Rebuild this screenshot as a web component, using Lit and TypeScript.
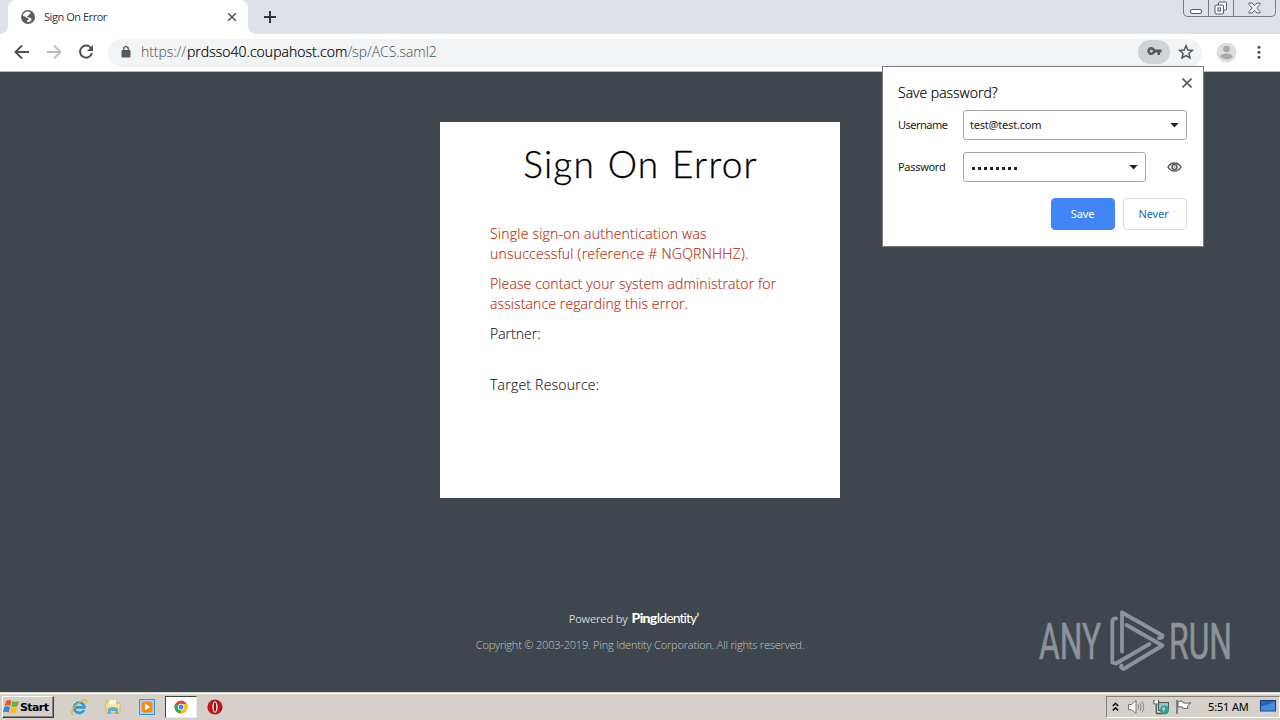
import { LitElement, html, css, svg } from "lit";
import { customElement } from "lit/decorators.js";

const chevron = html`<svg class="caret" width="9" height="5" viewBox="0 0 9 5"><path d="M.3 0h8.400L4.500 4.500z" fill="#222"/></svg>`;

@customElement("browser-chrome")
class BrowserChrome extends LitElement {
  static styles = css`
    :host { display: block; font-family: "Open Sans", "Noto Sans", sans-serif; }
    svg { display: block; flex: none; }
    .strip { height: 34px; background: #dee1e6; display: flex; padding-left: 8px; box-sizing: border-box; }
    .tab { width: 240px; height: 34px; background: #fff; border-radius: 8px 8px 0 0; display: flex; align-items: center; padding: 0 11px 0 13px; box-sizing: border-box; position: relative; }
    .tab::before, .tab::after { content: ""; position: absolute; bottom: 0; width: 8px; height: 8px; }
    .tab::before { left: -8px; background: radial-gradient(circle at 0 0, transparent 7.500px, #fff 8px); }
    .tab::after { right: -8px; background: radial-gradient(circle at 100% 0, transparent 7.500px, #fff 8px); }
    .title { font-size: 11px; color: #333; margin-left: 9px; flex: 1; letter-spacing: -0.45px; padding-bottom: 2px; }
    .plus { margin: 11px 0 0 16px; }
    .win { margin-left: auto; margin-right: 4px; width: 93px; height: 17px; border: 1px solid #737985; border-top: 0; border-radius: 0 0 5px 5px; box-sizing: border-box; display: flex; }
    .win span { display: flex; justify-content: center; align-items: center; border-right: 1px solid #737985; width: 25px; box-sizing: border-box; }
    .win span:last-child { border: 0; width: 41px; }
    .bar { height: 38px; background: #fff; border-bottom: 1px solid #b8bbc0; box-sizing: border-box; display: flex; align-items: center; padding: 0 13px 0 13px; }
    .nav { display: flex; gap: 14px; }
    .omni { margin-left: 13px; height: 28px; width: 1094px; border-radius: 14px; background: #f1f3f4; display: flex; align-items: center; box-sizing: border-box; padding: 0 7px 0 13px; }
    .lock, .star, .key, .dots, .nav svg { margin-top: -1px; }
    .url { font-size: 14px; font-weight: 300; color: #4c5054; margin-left: 10px; flex: 1; white-space: nowrap; letter-spacing: -0.05px; padding-bottom: 2px; }
    .url b { color: #000; font-weight: 300; letter-spacing: 0.03px; margin-left: 1px; -webkit-text-stroke: 0.2px #000; }
    .key { width: 32px; height: 24px; border-radius: 12px; background: #d0d3d5; display: flex; align-items: center; justify-content: center; margin-right: 7px; }
    .key svg { margin-top: -2px; }
    .me { margin: -1px 0 0 14px; }
    .dots { margin-left: 14px; }
  `;
  render() {
    return html`
      <div class="strip">
        <div class="tab">
          <svg width="14" height="14" viewBox="0 0 14 14"><circle cx="7" cy="7" r="7" fill="#5a5e62"/><path d="M6 1.600C4 2 2 3.700 1.600 6.100l2.600.5 1.600 1.300 1.500.2.300 1.500-1.500.7.200 1.800c1.500.1 3.200-.7 4.200-1.900L10.400 8.600 8.300 7.600 6.700 7.200 5.600 6.200l2-.8.6-1.300 1.500-.5-.2-1.200C8.400 1.700 7.200 1.400 6 1.600z" fill="#fff"/></svg>
          <span class="title">Sign On Error</span>
          <svg width="10" height="10" viewBox="0 0 10 10"><path d="M1.200 1.200l7.600 7.600M8.800 1.200L1.200 8.800" stroke="#55595d" stroke-width="1.600"/></svg>
        </div>
        <svg class="plus" width="12" height="12" viewBox="0 0 12 12"><path d="M6 0v12M0 6h12" stroke="#2d3340" stroke-width="2"/></svg>
        <div class="win">
          <span><svg width="13" height="15" viewBox="0 0 13 15"><rect x=".5" y="8.500" width="11" height="4" rx="1.500" fill="#fff" stroke="#555d6b"/></svg></span>
          <span><svg width="14" height="14" viewBox="0 0 14 14" fill="#f4f5f7" stroke="#555d6b"><rect x="4.500" y="1" width="8" height="8" rx="1"/><rect x="1" y="4" width="8.500" height="9" rx="1"/><rect x="4" y="7" width="2.500" height="3"/></svg></span>
          <span><svg width="13" height="12" viewBox="0 0 13 12"><path d="M1 1h3l2.500 2.700L9 1h3v1.500L8.800 6 12 9.500V11H9L6.500 8.300 4 11H1V9.500L4.200 6 1 2.500z" fill="#f7f8fa" stroke="#555d6b"/></svg></span>
        </div>
      </div>
      <div class="bar">
        <div class="nav">
          <svg width="18" height="18" viewBox="0 0 18 18" fill="none" stroke="#4d5155" stroke-width="1.900"><path d="M16 9H3M9 2.500L2.500 9 9 15.500"/></svg>
          <svg width="18" height="18" viewBox="0 0 18 18" fill="none" stroke="#b9bbbe" stroke-width="1.900"><path d="M2 9h13M9 2.500L15.500 9 9 15.500"/></svg>
          <svg width="18" height="18" viewBox="0 0 18 18"><path d="M14 5.200A6 6 0 1 0 14.900 10" fill="none" stroke="#4d5155" stroke-width="2"/><path d="M16 2v6h-6z" fill="#4d5155"/></svg>
        </div>
        <div class="omni">
          <svg class="lock" width="10" height="12" viewBox="0 0 10 12"><rect x=".5" y="4" width="9" height="7.500" rx="1" fill="#55595d"/><path d="M2.700 4.500V3a2.300 2.300 0 0 1 4.600 0v1.500" fill="none" stroke="#55595d" stroke-width="1.300"/></svg>
          <span class="url">https://<b>prdsso40.coupahost.com</b>/sp/ACS.saml2</span>
          <span class="key"><svg width="15" height="10" viewBox="0 0 15 10"><path d="M8 3.500A4 4 0 1 0 8 6.500h2.500V9h2.500V6.500h1.500v-3zM4.300 6.500a1.500 1.500 0 1 1 0-3 1.500 1.500 0 0 1 0 3z" fill="#55595d"/></svg></span>
          <svg class="star" width="18" height="18" viewBox="0 0 18 18"><path d="M9 2.700l1.800 4.300 4.600.4-3.500 3.100 1.100 4.500L9 12.600 5 15l1.100-4.500-3.500-3.100 4.600-.4z" fill="none" stroke="#55595d" stroke-width="1.500"/></svg>
        </div>
        <svg class="me" width="21" height="21" viewBox="0 0 21 21"><circle cx="10.500" cy="10.500" r="10" fill="#dddddf"/><circle cx="10.500" cy="7" r="3.300" fill="#a8a8aa"/><path d="M4.500 14.500c0-4 12-4 12 0-1.500 3.500-10.500 3.500-12 0z" fill="#a8a8aa"/></svg>
        <svg class="dots" width="16" height="16" viewBox="0 0 16 16" fill="#4d5155"><circle cx="8" cy="3.200" r="1.500"/><circle cx="8" cy="8.200" r="1.500"/><circle cx="8" cy="13.200" r="1.500"/></svg>
      </div>`;
  }
}

@customElement("password-bubble")
class PasswordBubble extends LitElement {
  static styles = css`
    :host { display: block; width: 322px; height: 181px; box-sizing: border-box; background: #fff; border: 1px solid #777b80; font: 11px/14px "Noto Sans", sans-serif; color: #222; padding: 0 16px 0 15px; }
    svg { display: block; flex: none; }
    .head { display: flex; justify-content: space-between; height: 43px; }
    h2 { margin: 17px 0 0; font: 300 14px/18px "Open Sans", sans-serif; color: #000; -webkit-text-stroke: 0.2px #000; }
    .x { margin: 11px -5px 0 0; }
    .row { display: flex; align-items: center; height: 30px; margin-bottom: 12px; }
    label { width: 65px; letter-spacing: -0.5px; }
    .row + .row label { letter-spacing: -0.3px; }
    .field { flex: 1; height: 30px; border: 1px solid #a5a7aa; border-radius: 3px; box-sizing: border-box; display: flex; align-items: center; justify-content: space-between; padding: 0 7px 0 6px; letter-spacing: -0.2px; }
    .pw { padding-left: 8px; }
    .mask { display: flex; gap: 3px; padding-top: 3px; }
    .mask i { width: 3px; height: 3px; background: #222; }
    .eye { margin: 0 5px 0 21px; }
    .actions { display: flex; justify-content: flex-end; gap: 8px; margin-top: 16px; }
    .btn { width: 64px; height: 32px; border-radius: 4px; border: 1px solid #dadce0; box-sizing: border-box; display: flex; align-items: center; justify-content: center; color: #2368b9; padding-right: 3px; letter-spacing: -0.1px; }
    .save { background: #4285f4; border-color: #4285f4; color: #fff; padding-right: 1px; }
  `;
  render() {
    return html`
      <div class="head"><h2>Save password?</h2>
        <svg class="x" width="10" height="10" viewBox="0 0 10 10"><path d="M.5.500l9 9M9.500.500l-9 9" stroke="#55595d" stroke-width="1.600"/></svg></div>
      <div class="row"><label>Username</label><div class="field"><span>test@test.com</span>${chevron}</div></div>
      <div class="row"><label>Password</label><div class="field pw"><span class="mask">${Array.from({ length: 8 }, () => html`<i></i>`)}</span>${chevron}</div>
        <svg class="eye" width="15" height="10" viewBox="0 0 15 10"><path d="M1 5C4-.4 11-.4 14 5 11 10.400 4 10.400 1 5z" fill="none" stroke="#55595d" stroke-width="1.500"/><circle cx="7.500" cy="5" r="2.500" fill="none" stroke="#55595d" stroke-width="1.500"/><circle cx="7.500" cy="5" r=".8" fill="#55595d"/></svg></div>
      <div class="actions"><span class="btn save">Save</span><span class="btn">Never</span></div>`;
  }
}

@customElement("error-page")
class ErrorPage extends LitElement {
  static styles = css`
    :host { display: flex; flex-direction: column; align-items: center; background: #40464d; padding-top: 50px; box-sizing: border-box; }
    .card { width: 400px; height: 376px; background: #fff; box-sizing: border-box; padding: 20px 50px 0; font: 300 14px/20px "Open Sans", sans-serif; color: #222; }
    h1 { margin: -1px -30px 37px; height: 46px; font: 300 37px/46px Lato, sans-serif; color: #000; text-align: center; letter-spacing: 1.200px; word-spacing: 1.500px; white-space: nowrap; -webkit-text-stroke: 0.3px #000; padding-left: 1px; }
    p { margin: 0 0 10px; white-space: nowrap; letter-spacing: 0.15px; -webkit-text-stroke: 0.15px currentColor; }
    .err { color: #bd2c0c; }
    .a { letter-spacing: 0.23px; }
    .b { letter-spacing: 0.12px; }
    .gap { margin-bottom: 31px; letter-spacing: 0; }
    .powered { margin-top: 111px; display: flex; align-items: baseline; color: #d3d6d9; font: 11px/18px "Open Sans", sans-serif; padding-right: 13px; letter-spacing: -0.15px; }
    .ping { color: #fff; font: 14px/18px Lato, sans-serif; margin-left: 4px; letter-spacing: -0.95px; }
    .ping b { font-weight: 900; letter-spacing: -0.7px; }
    .copy { margin-top: 9px; font: 300 11px/16px "Open Sans", sans-serif; color: #c3c7ca; white-space: nowrap; letter-spacing: -0.19px; }
  `;
  render() {
    return html`
      <div class="card">
        <h1>Sign On Error</h1>
        <p class="err a">Single sign-on authentication was<br>unsuccessful (reference # NGQRNHHZ).</p>
        <p class="err b">Please contact your system administrator for<br>assistance regarding this error.</p>
        <p class="gap">Partner:</p>
        <p class="a">Target Resource:</p>
      </div>
      <div class="powered">Powered by<span class="ping"><b>Ping</b>Identity’</span></div>
      <div class="copy">Copyright © 2003-2019. Ping Identity Corporation. All rights reserved.</div>`;
  }
}

@customElement("task-bar")
class TaskBar extends LitElement {
  static styles = css`
    :host { display: flex; height: 28px; box-sizing: border-box; background: #d5d0c9; border-top: 1px solid #d5d0c9; box-shadow: inset 0 1px #fff; align-items: center; padding: 1px 0 0 2px; font: 11px "DejaVu Sans", sans-serif; color: #000; }
    svg { display: block; flex: none; }
    .start { width: 52px; height: 22px; box-sizing: border-box; border: 1px solid; border-color: #fff #404040 #404040 #fff; box-shadow: inset -1px -1px #87837d; display: flex; align-items: center; font: bold 11px "DejaVu Sans", sans-serif; letter-spacing: -0.6px; }
    .quick { display: flex; align-items: center; margin-left: 16px; gap: 16px; }
    .active { width: 32px; height: 22px; background: #fff; border: 1px solid; border-color: #404040 #eee #eee #404040; box-sizing: border-box; display: flex; align-items: center; justify-content: center; margin: 0 -7px; }
    .tray { margin-left: auto; width: 174px; height: 22px; border: 1px solid; border-color: #85817b #fff #fff #85817b; box-sizing: border-box; display: flex; align-items: center; padding: 0 3px 0 5px; }
    .flag { margin-left: 7px; }
    .speaker { margin-left: 9px; }
    .net { margin-left: 8px; }
    .time { margin-left: 16px; font: 11px "Noto Sans", sans-serif; letter-spacing: -0.15px; flex: 1; white-space: nowrap; padding-bottom: 1px; }
  `;
  render() {
    return html`
      <div class="start">
        <svg width="17" height="16" viewBox="0 0 17 16"><path d="M3 2q3-2 5.500-.3L7.300 7Q4.500 5.500 1.700 7z" fill="#e85a28"/><path d="M9.500 2q3 1.500 6.500-.3L14.500 7q-3 1.700-6.200.300z" fill="#6ab03c"/><path d="M1.400 8q3-1.500 5.600 0l-1.300 5.500Q3 12 0 13.300z" fill="#3b82d4"/><path d="M8 8.300q3 1.500 6.200-.2L12.800 13.500q-3 1.600-6 .3z" fill="#f5bd2c"/></svg>Start
      </div>
      <div class="quick">
        <svg width="18" height="18" viewBox="0 0 18 18"><path d="M14 12A5.200 5.200 0 1 1 14.500 9.300H5" fill="none" stroke="#3497d5" stroke-width="2.700"/><path d="M3 16.500C-1 16 4 8 9.500 4.500 14 1 18 1 16.200 5.500" fill="none" stroke="#e4b53b" stroke-width="1.400"/></svg>
        <svg width="18" height="18" viewBox="0 0 18 18"><path d="M2 3h5l1 2h8v10H2z" fill="#f0d886" stroke="#c9a952" stroke-width=".7"/><path d="M5 2h7v5H5z" fill="#f9f4d5"/><path d="M2 6.500h14v3H2z" fill="#f4e4a0"/><path d="M4 16v-5.500q5-3 10 0V16h-2.500v-3h-5v3z" fill="#5cadd8"/></svg>
        <svg width="18" height="18" viewBox="0 0 18 18"><rect x="1.500" y="1.500" width="15" height="15" fill="#a9d0ec" stroke="#4a8fc1"/><rect x="3.500" y="3.500" width="11" height="11" rx="3" fill="#f28a1d"/><path d="M7 5.500v7l5-3.500z" fill="#fff"/></svg>
        <div class="active"><svg width="14" height="14" viewBox="0 0 14 14"><circle cx="7" cy="7" r="6.500" fill="#e04a3a"/><path d="M7 7L1.300 3.800A6.500 6.500 0 0 0 6.500 13.500z" fill="#35a853"/><path d="M7 7h6.500a6.500 6.500 0 0 1-7 6.500z" fill="#fbc116"/><path d="M7 4h5.800a6.500 6.500 0 0 1 .7 3L10 8z" fill="#fbc116"/><circle cx="7" cy="7" r="3.200" fill="#fff"/><circle cx="7" cy="7" r="2.500" fill="#4285f4"/></svg></div>
        <svg width="18" height="18" viewBox="0 0 18 18"><circle cx="9" cy="9" r="7.600" fill="#bb1720"/><ellipse cx="9" cy="9" rx="2.600" ry="5.700" fill="#eee"/><ellipse cx="9" cy="9" rx="1.200" ry="4.800" fill="#921017"/></svg>
      </div>
      <div class="tray">
        <svg width="7" height="10" viewBox="0 0 7 10" fill="none" stroke="#000" stroke-width="1.400"><path d="M.8 4l2.700-2.700L6.200 4M.8 8.500l2.700-2.700 2.700 2.700"/></svg>
        <svg class="speaker" width="17" height="16" viewBox="0 0 17 16"><path d="M.5 5.500h3L8 1.500v13L3.500 10.500h-3z" fill="#fff" stroke="#777"/><path d="M10 5.500q1.500 2.500 0 5M12 4q2.500 4 0 8M14 2.500q3.500 5.500 0 11" fill="none" stroke="#888"/></svg>
        <svg class="net" width="16" height="16" viewBox="0 0 16 16"><rect x="5.500" y="3.500" width="10" height="8" fill="#9dbdcf" stroke="#555"/><path d="M1 1v3.500h4.500V1M3.300 4.500v10M3.300 14.500H10" fill="none" stroke="#555" stroke-width="1.300"/><path d="M1.500 1.500h3.500v3H1.500z" fill="#fff"/><circle cx="11.500" cy="11" r="4.500" fill="#2f9b93"/><path d="M8.500 9l3-1 1 2-2 3z" fill="#9bdc9b"/></svg>
        <svg class="flag" width="16" height="16" viewBox="0 0 16 16"><path d="M1 1v14" stroke="#666" stroke-width="1.500"/><path d="M2 2.500q3-1 5 0v1.300q3 1 8 0l-3.500 3 .5 2.500H6.500V8Q4 7.500 2 8z" fill="#fff" stroke="#666"/></svg>
        <span class="time">5:51 AM</span>
        <svg width="16" height="14" viewBox="0 0 16 14"><rect x=".5" y=".5" width="15" height="10.500" fill="#2864b5" stroke="#173f7c"/><path d="M1 6Q8 6 15 1v9.500H1z" fill="#4a8bd6"/><path d="M3 13h10" stroke="#c4dcf0" stroke-width="1.500"/></svg>
      </div>`;
  }
}

@customElement("app-root")
class AppRoot extends LitElement {
  static styles = css`
    :host { display: flex; flex-direction: column; width: 1280px; height: 720px; position: relative; overflow: hidden; }
    error-page { flex: 1; }
    password-bubble { position: absolute; left: 882px; top: 66px; }
    .mark { position: absolute; left: 1036px; top: 608px; overflow: visible; }
  `;
  render() {
    const text = (x: number, w: number, s: string) => svg`<text x=${x} y="50.500" textLength=${w} lengthAdjust="spacingAndGlyphs" font-family="Roboto, sans-serif" font-size="50" fill="#8d939d" stroke="#8d939d" stroke-width=".7">${s}</text>`;
    return html`
      <browser-chrome></browser-chrome>
      <error-page></error-page>
      <task-bar></task-bar>
      <svg class="mark" width="210" height="72" viewBox="0 0 210 72">
        ${text(3, 62, "ANY")}${text(133, 63, "RUN")}
        <g fill="none" stroke="#8d939d" stroke-width="3.800" stroke-linejoin="round" stroke-linecap="round">
          <path d="M80 10.500Q76.300 10 76.300 14V54.500L80 55.500 113.500 36"/><path d="M86 43.500V4.500L126.500 27.500Q127 30 123 30.200"/><path d="M90.500 17L126.500 37.500 87.500 61Q84 60 85.500 57.500"/>
        </g>
      </svg>
      <password-bubble></password-bubble>`;
  }
}
